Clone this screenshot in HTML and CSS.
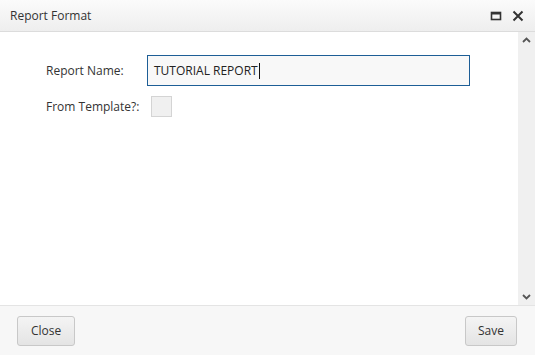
FILE: index.html
```html
<!DOCTYPE html>
<html lang="en">
<head>
  <meta charset="UTF-8">
  <title>Report Format</title>
  <link rel="stylesheet" href="styles.css">
</head>
<body>
  <div class="dialog">
    <div class="titlebar">
      <span class="title">Report Format</span>
      <div class="actions">
        <svg width="12" height="12" viewBox="0 0 12 12"><rect x="1.5" y="2.5" width="9" height="7" fill="none" stroke="#333" stroke-width="1.6"/><rect x="1" y="2" width="10" height="2.5" fill="#333"/></svg>
        <svg width="12" height="12" viewBox="0 0 12 12"><path d="M1.5 1.5 L10.5 10.5 M10.5 1.5 L1.5 10.5" stroke="#333" stroke-width="2"/></svg>
      </div>
    </div>
    <div class="body">
      <div class="content">
        <div class="row">
          <label class="label">Report Name:</label>
          <div class="input">TUTORIAL REPORT<span class="caret"></span></div>
        </div>
        <div class="row row-check">
          <label class="label">From Template?:</label>
          <span class="checkbox"></span>
        </div>
      </div>
      <div class="scrollbar">
        <svg width="9" height="6" viewBox="0 0 9 6"><path d="M1 5 L4.5 1.5 L8 5" fill="none" stroke="#555" stroke-width="1.8"/></svg>
        <svg width="9" height="6" viewBox="0 0 9 6"><path d="M1 1 L4.5 4.5 L8 1" fill="none" stroke="#555" stroke-width="1.8"/></svg>
      </div>
    </div>
    <div class="footer">
      <button class="btn btn-close">Close</button>
      <button class="btn">Save</button>
    </div>
  </div>
</body>
</html>
```

FILE: styles.css
```css
body {
  margin: 0;
  font-family: "Open Sans", Arial, sans-serif;
  font-size: 12px;
  color: #333;
  background: #fff;
}
.dialog {
  width: 535px;
  height: 355px;
  display: flex;
  flex-direction: column;
}
.titlebar {
  height: 32px;
  box-sizing: border-box;
  border-bottom: 1px solid #dcdcdc;
  background: linear-gradient(#fbfbfb, #eeeeee);
  display: flex;
  align-items: center;
  justify-content: space-between;
  padding: 0 11px 0 10px;
}
.title {
  color: #333;
}
.actions {
  display: flex;
  gap: 10px;
  align-items: center;
}
.body {
  flex: 1;
  display: flex;
  min-height: 0;
}
.content {
  flex: 1;
  padding: 23px 0 0 46px;
}
.row {
  display: flex;
  align-items: center;
  height: 31px;
}
.row-check {
  margin-top: 10px;
  height: 21px;
}
.label {
  width: 101px;
}
.input {
  width: 323px;
  height: 31px;
  box-sizing: border-box;
  border: 1px solid #1d5e96;
  background: #f8f8f8;
  padding: 0 6px;
  display: flex;
  align-items: center;
  color: #222;
}
.caret {
  display: inline-block;
  width: 1px;
  height: 16px;
  margin-left: 1px;
  background: #111;
}
.checkbox {
  margin-left: 4px;
  width: 21px;
  height: 21px;
  box-sizing: border-box;
  border: 1px solid #d4d4d4;
  background: #f0f0f0;
}
.scrollbar {
  width: 17px;
  background: #f0f0f0;
  display: flex;
  flex-direction: column;
  justify-content: space-between;
  align-items: center;
  padding: 5px 0;
  box-sizing: border-box;
}
.footer {
  height: 50px;
  box-sizing: border-box;
  border-top: 1px solid #e4e4e4;
  background: #f7f7f7;
  display: flex;
  justify-content: space-between;
  align-items: center;
  padding: 0 18px 0 17px;
}
.btn {
  font-family: "Open Sans", Arial, sans-serif;
  font-size: 12px;
  color: #333;
  height: 30px;
  padding: 0 12px;
  border: 1px solid #c8c8c8;
  border-radius: 3px;
  background: linear-gradient(#f4f4f4, #e4e4e4);
}
.btn-close {
  padding: 0 13px;
}
```
